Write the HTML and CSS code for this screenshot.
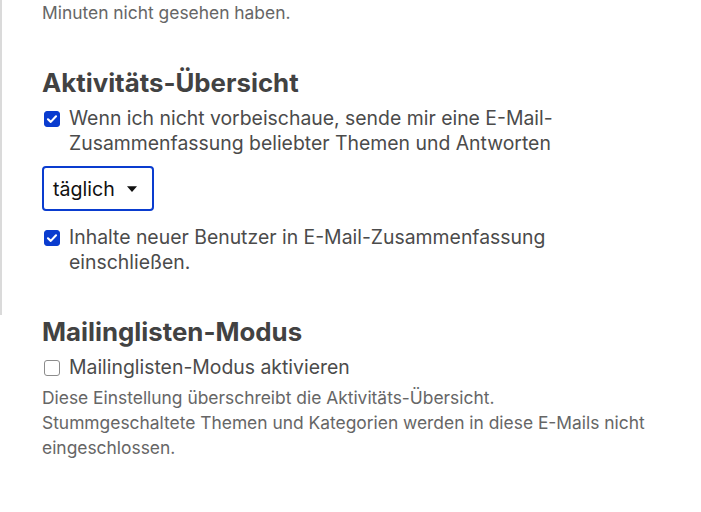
FILE: index.html
```html
<!DOCTYPE html>
<html lang="de">
<head>
<meta charset="utf-8">
<link rel="stylesheet" href="styles.css">
</head>
<body>
<div class="page">
  <section class="section bordered">
    <p class="hint">Minuten nicht gesehen haben.</p>
    <h2 class="title first">Aktivitäts-Übersicht</h2>
    <label class="check-row">
      <span class="box checked"><svg viewBox="0 0 16 16" width="14" height="14"><path d="M3.4 8.3 L6.6 11.3 L12.6 4.9" fill="none" stroke="#fff" stroke-width="2.4" stroke-linecap="round" stroke-linejoin="round"/></svg></span>
      <span class="label">Wenn ich nicht vorbeischaue, sende mir eine E-Mail-Zusammenfassung beliebter Themen und Antworten</span>
    </label>
    <div class="select">
      <span class="select-value">täglich</span>
      <svg class="caret" viewBox="0 0 10 6" width="10" height="6"><path d="M0 0.2 L10 0.2 L5 6 Z" fill="#111"/></svg>
    </div>
    <label class="check-row">
      <span class="box checked"><svg viewBox="0 0 16 16" width="14" height="14"><path d="M3.4 8.3 L6.6 11.3 L12.6 4.9" fill="none" stroke="#fff" stroke-width="2.4" stroke-linecap="round" stroke-linejoin="round"/></svg></span>
      <span class="label">Inhalte neuer Benutzer in E-Mail-Zusammenfassung einschließen.</span>
    </label>
  </section>
  <section class="section">
    <h2 class="title second">Mailinglisten-Modus</h2>
    <label class="check-row">
      <span class="box"></span>
      <span class="label">Mailinglisten-Modus aktivieren</span>
    </label>
    <p class="hint desc">Diese Einstellung überschreibt die Aktivitäts-Übersicht.<br>Stummgeschaltete Themen und Kategorien werden in diese E-Mails nicht eingeschlossen.</p>
  </section>
</div>
</body>
</html>
```

FILE: styles.css
```css
html, body {
  margin: 0;
  padding: 0;
  background: #fff;
}
body {
  font-family: Inter, "Noto Sans", sans-serif;
  color: #4b4b4b;
  width: 701px;
  height: 512px;
  overflow: hidden;
}
.page {
  display: flex;
  flex-direction: column;
}
.section {
  padding-left: 42px;
  padding-right: 36px;
}
.bordered {
  border-left: 2px solid #dadada;
  padding-left: 40px;
  padding-bottom: 40px;
}
.hint {
  margin: 0;
  font-size: 17.4px;
  line-height: 25px;
  color: #666;
}
.title {
  margin: 0;
  font-size: 25.8px;
  line-height: 32px;
  font-weight: 700;
  color: #424242;
}
.title.first {
  margin-top: 42px;
  margin-bottom: 7px;
}
.title.second {
  margin-top: 1px;
  margin-bottom: 7px;
}
.check-row {
  display: flex;
  align-items: flex-start;
  gap: 9px;
  font-size: 19.4px;
  line-height: 25px;
  padding-left: 2px;
}
.box {
  flex: none;
  width: 16px;
  height: 16px;
  margin-top: 5px;
  border: 1px solid #8c8c8c;
  border-radius: 3px;
  box-sizing: border-box;
  display: flex;
  align-items: center;
  justify-content: center;
  background: #fff;
}
.box.checked {
  background: #0a3ccf;
  border-color: #0a3ccf;
}
.select {
  width: 112px;
  height: 45px;
  box-sizing: border-box;
  border: 2px solid #0a3ccf;
  border-radius: 4px;
  display: flex;
  align-items: center;
  gap: 12px;
  padding-left: 9px;
  margin: 10px 0 14px;
  font-size: 19.6px;
  color: #111;
}
.caret {
  margin-top: 1px;
}
.desc {
  margin-top: 5px;
}
```
